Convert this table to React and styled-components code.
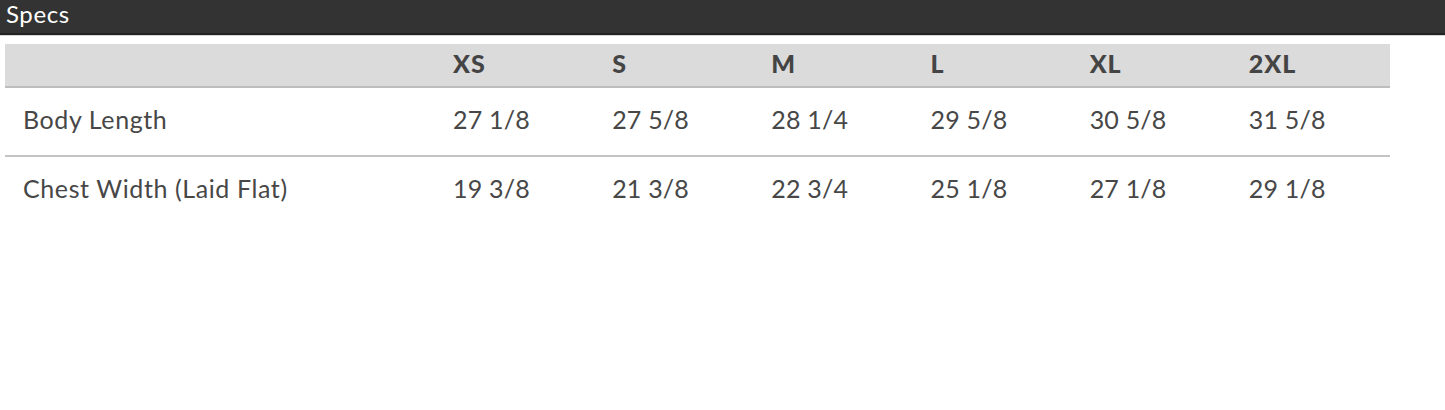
import React from "react";
import styled, { createGlobalStyle } from "styled-components";

const GlobalStyle = createGlobalStyle`
  body {
    margin: 0;
    background: #fff;
    font-family: Lato, "Open Sans", sans-serif;
  }
`;

const TitleBar = styled.div`
  height: 33px;
  background: #333333;
  border-bottom: 2px solid #222;
  box-shadow: 0 1px 0 #d8d8d8;
  color: #fff;
  font-size: 24px;
  letter-spacing: 0.6px;
  line-height: 28px;
  padding-left: 6px;
`;

const SpecTable = styled.table`
  margin: 9px 0 0 5px;
  width: 1385px;
  border-collapse: collapse;
  table-layout: fixed;
  color: #444;
`;

const HeadRow = styled.tr`
  background: #dbdbdb;
  border-bottom: 2px solid #bdbdbd;
`;

const Row = styled.tr`
  border-bottom: ${(p) => (p.$last ? "none" : "2px solid #c4c4c4")};
`;

const Th = styled.th`
  height: 37px;
  text-align: left;
  font-size: 25px;
  font-weight: 900;
  letter-spacing: 1px;
  color: #444;
  padding: 0 0 5px 18px;
  vertical-align: middle;
`;

const Td = styled.td`
  height: 61px;
  font-size: 25px;
  font-weight: 400;
  letter-spacing: ${(p) => (p.$label ? "0.6px" : "0.2px")};
  color: #474747;
  padding: 0 0 6px 18px;
  vertical-align: middle;
`;

const sizes = ["XS", "S", "M", "L", "XL", "2XL"];
const rows = [
  { label: "Body Length", values: ["27 1/8", "27 5/8", "28 1/4", "29 5/8", "30 5/8", "31 5/8"] },
  { label: "Chest Width (Laid Flat)", values: ["19 3/8", "21 3/8", "22 3/4", "25 1/8", "27 1/8", "29 1/8"] },
];

const App = () => (
  <>
    <GlobalStyle />
    <TitleBar>Specs</TitleBar>
    <SpecTable>
      <colgroup>
        <col style={{ width: "430px" }} />
        {sizes.map((s) => (
          <col key={s} />
        ))}
      </colgroup>
      <thead>
        <HeadRow>
          <Th />
          {sizes.map((s) => (
            <Th key={s}>{s}</Th>
          ))}
        </HeadRow>
      </thead>
      <tbody>
        {rows.map((r, i) => (
          <Row key={r.label} $last={i === rows.length - 1}>
            <Td $label>{r.label}</Td>
            {r.values.map((v, j) => (
              <Td key={j}>{v}</Td>
            ))}
          </Row>
        ))}
      </tbody>
    </SpecTable>
  </>
);

export default App;
